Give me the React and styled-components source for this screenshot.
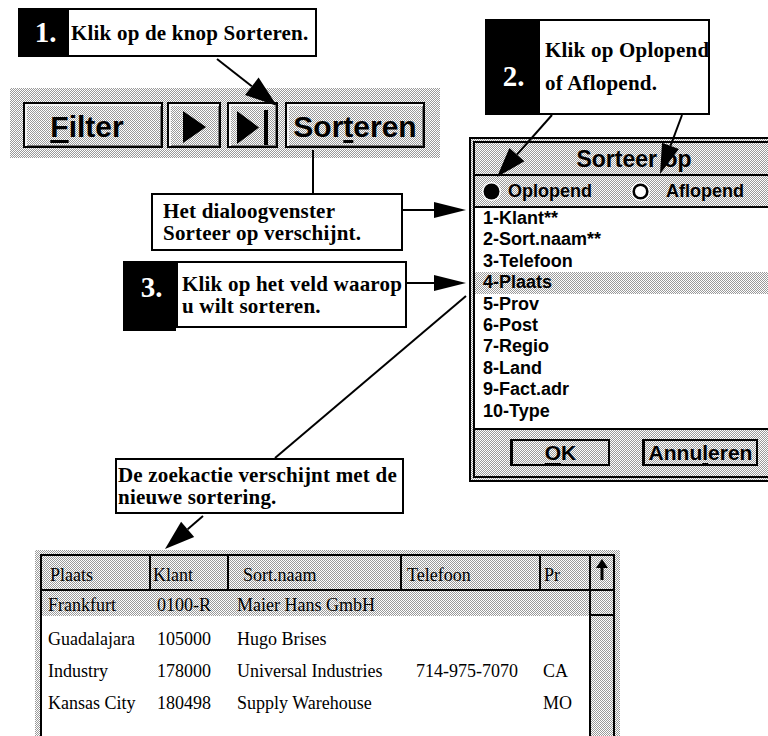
import styled, { createGlobalStyle, css } from 'styled-components';

const GlobalStyle = createGlobalStyle`
  * { box-sizing: border-box; }
  body { margin: 0; background: #fff; }
`;

// halftone grey of the old screen shots
const dither = css`
  background-color: #fff;
  background-image: conic-gradient(#9a9a9a 25%, #fff 0 50%, #9a9a9a 0 75%, #fff 0);
  background-size: 2px 2px;
`;

const Canvas = styled.div`
  position: relative;
  width: 768px;
  height: 736px;
  overflow: hidden;
  background: #fff;
  color: #000;
`;

const Overlay = styled.svg`
  position: absolute;
  left: 0;
  top: 0;
  z-index: 5;
  pointer-events: none;
`;

/* ---------- callouts ---------- */

const Callout = styled.div`
  position: absolute;
  left: ${p => p.$x}px;
  top: ${p => p.$y}px;
  display: flex;
  align-items: flex-start;
`;

const Badge = styled.div`
  width: ${p => p.$w}px;
  height: ${p => p.$h}px;
  background: #000;
  color: #fff;
  display: flex;
  align-items: center;
  justify-content: center;
  padding-left: ${p => p.$pl || 0}px;
  padding-top: ${p => p.$pt || 0}px;
  font: bold 29px/1 "Liberation Serif", "Times New Roman", serif;
`;

const Note = styled.div`
  width: ${p => p.$w}px;
  height: ${p => p.$h}px;
  background: #fff;
  border: 2px solid #000;
  display: flex;
  flex-direction: column;
  justify-content: center;
  padding-left: ${p => p.$pl}px;
  font: bold 21px/${p => p.$lh || 22}px "Liberation Serif", "Times New Roman", serif;
  letter-spacing: 0.2px;
  white-space: nowrap;
`;

/* ---------- toolbar ---------- */

const Toolbar = styled.div`
  position: absolute;
  left: 10px;
  top: 88px;
  width: 430px;
  height: 70px;
  ${dither};
  display: flex;
  align-items: flex-start;
  padding: 14px 0 0 13px;
`;

const ToolButton = styled.div`
  width: ${p => p.$w}px;
  height: 46px;
  margin-left: ${p => p.$ml || 0}px;
  border: 2px solid #000;
  ${dither};
  box-shadow: inset 2px 2px 0 #f2f2f2, inset -1px -1px 0 #777;
  display: flex;
  align-items: center;
  justify-content: center;
  padding: 4px ${p => p.$pr || 0}px 0 0;
  font: bold 30px/1 "Liberation Sans", Arial, sans-serif;
`;

const Key = styled.span`
  text-decoration: underline;
  text-decoration-thickness: 3px;
  text-underline-offset: 3px;
`;

/* ---------- dialog ---------- */

const Dialog = styled.div`
  position: absolute;
  left: 469px;
  top: 137px;
  width: 330px;
  height: 345px;
  border: 2px solid #000;
  padding: 2px;
  ${dither};
`;

const Frame = styled.div`
  height: 100%;
  border: 2px solid #000;
  display: flex;
  flex-direction: column;
`;

const TitleBar = styled.div`
  height: 33px;
  border-bottom: 2px solid #000;
  display: flex;
  align-items: center;
  justify-content: center;
  padding-top: 2px;
  font: bold 23px/1 "Liberation Sans", Arial, sans-serif;
`;

const RadioRow = styled.div`
  height: 32px;
  border-bottom: 2px solid #000;
  display: flex;
  align-items: center;
  padding-left: 7px;
  gap: 39px;
  font: bold 18px/1 "Liberation Sans", Arial, sans-serif;
`;

const RadioOption = styled.label`
  display: flex;
  align-items: center;
  gap: ${p => p.$gap}px;
`;

const FieldList = styled.ul`
  list-style: none;
  margin: 0;
  padding: 0;
  height: 222px;
  background: #fff;
  border-bottom: 2px solid #000;
  font: bold 18px/21.4px "Liberation Sans", Arial, sans-serif;
`;

const FieldItem = styled.li`
  height: 21.4px;
  padding-left: 8px;
  ${p => p.$sel && dither};
`;

const ButtonRow = styled.div`
  flex: 1;
  display: flex;
  align-items: center;
  padding: 0 0 2px 35px;
  gap: 32px;
`;

const DialogButton = styled.div`
  width: ${p => p.$w}px;
  height: 27px;
  border: 2px solid #000;
  border-left-width: 3px;
  display: flex;
  align-items: center;
  justify-content: center;
  font: bold 21px/1 "Liberation Sans", Arial, sans-serif;
`;

/* ---------- table ---------- */

const TableFrame = styled.div`
  position: absolute;
  left: 35px;
  top: 550px;
  width: 585px;
  height: 200px;
  ${dither};
  padding: 4px 0 0 5px;
`;

const TableBox = styled.div`
  width: 575px;
  height: 100%;
  border: 2px solid #000;
  border-bottom: none;
  display: flex;
  font: 18px/1 "Liberation Serif", "Times New Roman", serif;
`;

const TableMain = styled.div`
  width: 547px;
  display: flex;
  flex-direction: column;
`;

const HeadRow = styled.div`
  height: 35px;
  display: flex;
  border-bottom: 2px solid #000;
`;

const HeadCell = styled.div`
  width: ${p => p.$w}px;
  padding: 5px 0 0 ${p => p.$pad}px;
  display: flex;
  align-items: center;
  border-right: ${p => (p.$last ? 'none' : '2px solid #000')};
`;

const Body = styled.div`
  flex: 1;
  display: flex;
  flex-direction: column;
  background: #fff;
  padding-top: 8px;
`;

const DataRow = styled.div`
  display: flex;
  height: ${p => (p.$current ? 25 : 32)}px;
  line-height: ${p => (p.$current ? 21 : 32)}px;
  padding-top: ${p => (p.$current ? 4 : 0)}px;
  ${p => p.$current && css`
    ${dither};
    margin-top: -8px;
    margin-bottom: 7px;
  `}
`;

const DataCell = styled.div`
  width: ${p => p.$w}px;
  padding-left: ${p => p.$pad}px;
  white-space: nowrap;
`;

const ScrollBar = styled.div`
  flex: 1;
  border-left: 2px solid #000;
  display: flex;
  flex-direction: column;
`;

const ScrollArrow = styled.div`
  height: 35px;
  border-bottom: 2px solid #000;
  display: flex;
  justify-content: center;
  padding-top: 3px;
`;

const ScrollThumb = styled.div`
  height: 25px;
  border-bottom: 2px solid #000;
`;

const columns = [
  { label: 'Plaats', w: 109, head: 8, cell: 6 },
  { label: 'Klant', w: 78, head: 2, cell: 6 },
  { label: 'Sort.naam', w: 173, head: 14, cell: 8 },
  { label: 'Telefoon', w: 139, head: 5, cell: 14 },
  { label: 'Pr', w: 48, head: 3, cell: 2 },
];

const rows = [
  ['Frankfurt', '0100-R', 'Maier Hans GmbH', '', ''],
  ['Guadalajara', '105000', 'Hugo Brises', '', ''],
  ['Industry', '178000', 'Universal Industries', '714-975-7070', 'CA'],
  ['Kansas City', '180498', 'Supply Warehouse', '', 'MO'],
];

const fields = [
  '1-Klant**', '2-Sort.naam**', '3-Telefoon', '4-Plaats', '5-Prov',
  '6-Post', '7-Regio', '8-Land', '9-Fact.adr', '10-Type',
];

function Radio({ on }) {
  return (
    <svg width="19" height="19" viewBox="0 0 19 19">
      <circle cx="9.5" cy="9.5" r="9.5" fill="#fff" />
      {on ? (
        <circle cx="9.5" cy="9.5" r="8" fill="#000" />
      ) : (
        <circle cx="9.5" cy="9.5" r="6.8" fill="#fff" stroke="#000" strokeWidth="2.6" />
      )}
    </svg>
  );
}

function Arrow({ x1, y1, x2, y2, len = 30, hw = 9 }) {
  const d = Math.hypot(x2 - x1, y2 - y1);
  const ux = (x2 - x1) / d;
  const uy = (y2 - y1) / d;
  const bx = x2 - ux * len;
  const by = y2 - uy * len;
  const px = -uy * hw;
  const py = ux * hw;
  return (
    <g>
      <line x1={x1} y1={y1} x2={bx} y2={by} stroke="#000" strokeWidth="2" />
      <polygon
        points={`${x2},${y2} ${bx + px},${by + py} ${bx - px},${by - py}`}
        fill="#000"
      />
    </g>
  );
}

export default function App() {
  return (
    <Canvas>
      <GlobalStyle />

      <Toolbar>
        <ToolButton $w={140} $pr={12}>
          <span><Key>F</Key>ilter</span>
        </ToolButton>
        <ToolButton $w={54} $ml={4}>
          <svg width="23" height="32" viewBox="0 0 23 32">
            <polygon points="0,0 23,16 0,32" fill="#000" />
          </svg>
        </ToolButton>
        <ToolButton $w={51} $ml={6}>
          <svg width="31" height="35" viewBox="0 0 31 35">
            <polygon points="0,1 22,17.5 0,34" fill="#000" />
            <rect x="27" y="0" width="4" height="35" fill="#000" />
          </svg>
        </ToolButton>
        <ToolButton $w={140} $ml={7}>
          <span>Sor<Key>t</Key>eren</span>
        </ToolButton>
      </Toolbar>

      <Dialog>
        <Frame>
          <TitleBar>Sorteer op</TitleBar>
          <RadioRow>
            <RadioOption $gap={7}><Radio on />Oplopend</RadioOption>
            <RadioOption $gap={16}><Radio />Aflopend</RadioOption>
          </RadioRow>
          <FieldList>
            {fields.map(f => (
              <FieldItem key={f} $sel={f === '4-Plaats'}>{f}</FieldItem>
            ))}
          </FieldList>
          <ButtonRow>
            <DialogButton $w={100}><span><Key>O</Key>K</span></DialogButton>
            <DialogButton $w={116}><span>Annu<Key>l</Key>eren</span></DialogButton>
          </ButtonRow>
        </Frame>
      </Dialog>

      <TableFrame>
        <TableBox>
          <TableMain>
            <HeadRow>
              {columns.map((c, i) => (
                <HeadCell key={c.label} $w={c.w} $pad={c.head} $last={i === columns.length - 1}>
                  {c.label}
                </HeadCell>
              ))}
            </HeadRow>
            <Body>
              {rows.map((r, ri) => (
                <DataRow key={r[0]} $current={ri === 0}>
                  {r.map((v, ci) => (
                    <DataCell key={ci} $w={columns[ci].w} $pad={columns[ci].cell}>{v}</DataCell>
                  ))}
                </DataRow>
              ))}
            </Body>
          </TableMain>
          <ScrollBar>
            <ScrollArrow>
              <svg width="12" height="21" viewBox="0 0 12 21">
                <polygon points="6,0 12,9 0,9" fill="#000" />
                <rect x="4.5" y="8" width="3" height="13" fill="#000" />
              </svg>
            </ScrollArrow>
            <ScrollThumb />
          </ScrollBar>
        </TableBox>
      </TableFrame>

      <Callout $x={18} $y={8}>
        <Badge $w={49} $h={49} $pl={6}>1.</Badge>
        <Note $w={250} $h={49} $pl={2}>Klik op de knop Sorteren.</Note>
      </Callout>

      <Callout $x={485} $y={19}>
        <Badge $w={53} $h={96} $pl={4} $pt={18}>2.</Badge>
        <Note $w={172} $h={96} $pl={5} $lh={33}>
          <span>Klik op Oplopend</span>
          <span>of Aflopend.</span>
        </Note>
      </Callout>

      <Callout $x={151} $y={193}>
        <Note $w={252} $h={58} $pl={10}>
          <span>Het dialoogvenster</span>
          <span>Sorteer op verschijnt.</span>
        </Note>
      </Callout>

      <Callout $x={123} $y={261}>
        <Badge $w={53} $h={70} $pl={4}>
          <span style={{ marginTop: -18 }}>3.</span>
        </Badge>
        <Note $w={231} $h={67} $pl={4} $lh={22}>
          <span>Klik op het veld waarop</span>
          <span>u wilt sorteren.</span>
        </Note>
      </Callout>

      <Callout $x={115} $y={458}>
        <Note $w={289} $h={56} $pl={1}>
          <span>De zoekactie verschijnt met de</span>
          <span>nieuwe sortering.</span>
        </Note>
      </Callout>

      <Overlay width="768" height="736" viewBox="0 0 768 736">
        <Arrow x1={217} y1={59} x2={277} y2={106} len={32} hw={11} />
        <line x1={313} y1={150} x2={313} y2={193} stroke="#000" strokeWidth="2" />
        <Arrow x1={403} y1={210} x2={466} y2={210} len={32} hw={8} />
        <Arrow x1={407} y1={283} x2={466} y2={283} len={32} hw={8} />
        <line x1={466} y1={296} x2={275} y2={458} stroke="#000" strokeWidth="2" />
        <Arrow x1={552} y1={115} x2={497} y2={177} len={30} hw={10} />
        <Arrow x1={682} y1={115} x2={660} y2={174} len={30} hw={9} />
        <Arrow x1={203} y1={516} x2={165} y2={549} len={30} hw={10} />
      </Overlay>
    </Canvas>
  );
}
